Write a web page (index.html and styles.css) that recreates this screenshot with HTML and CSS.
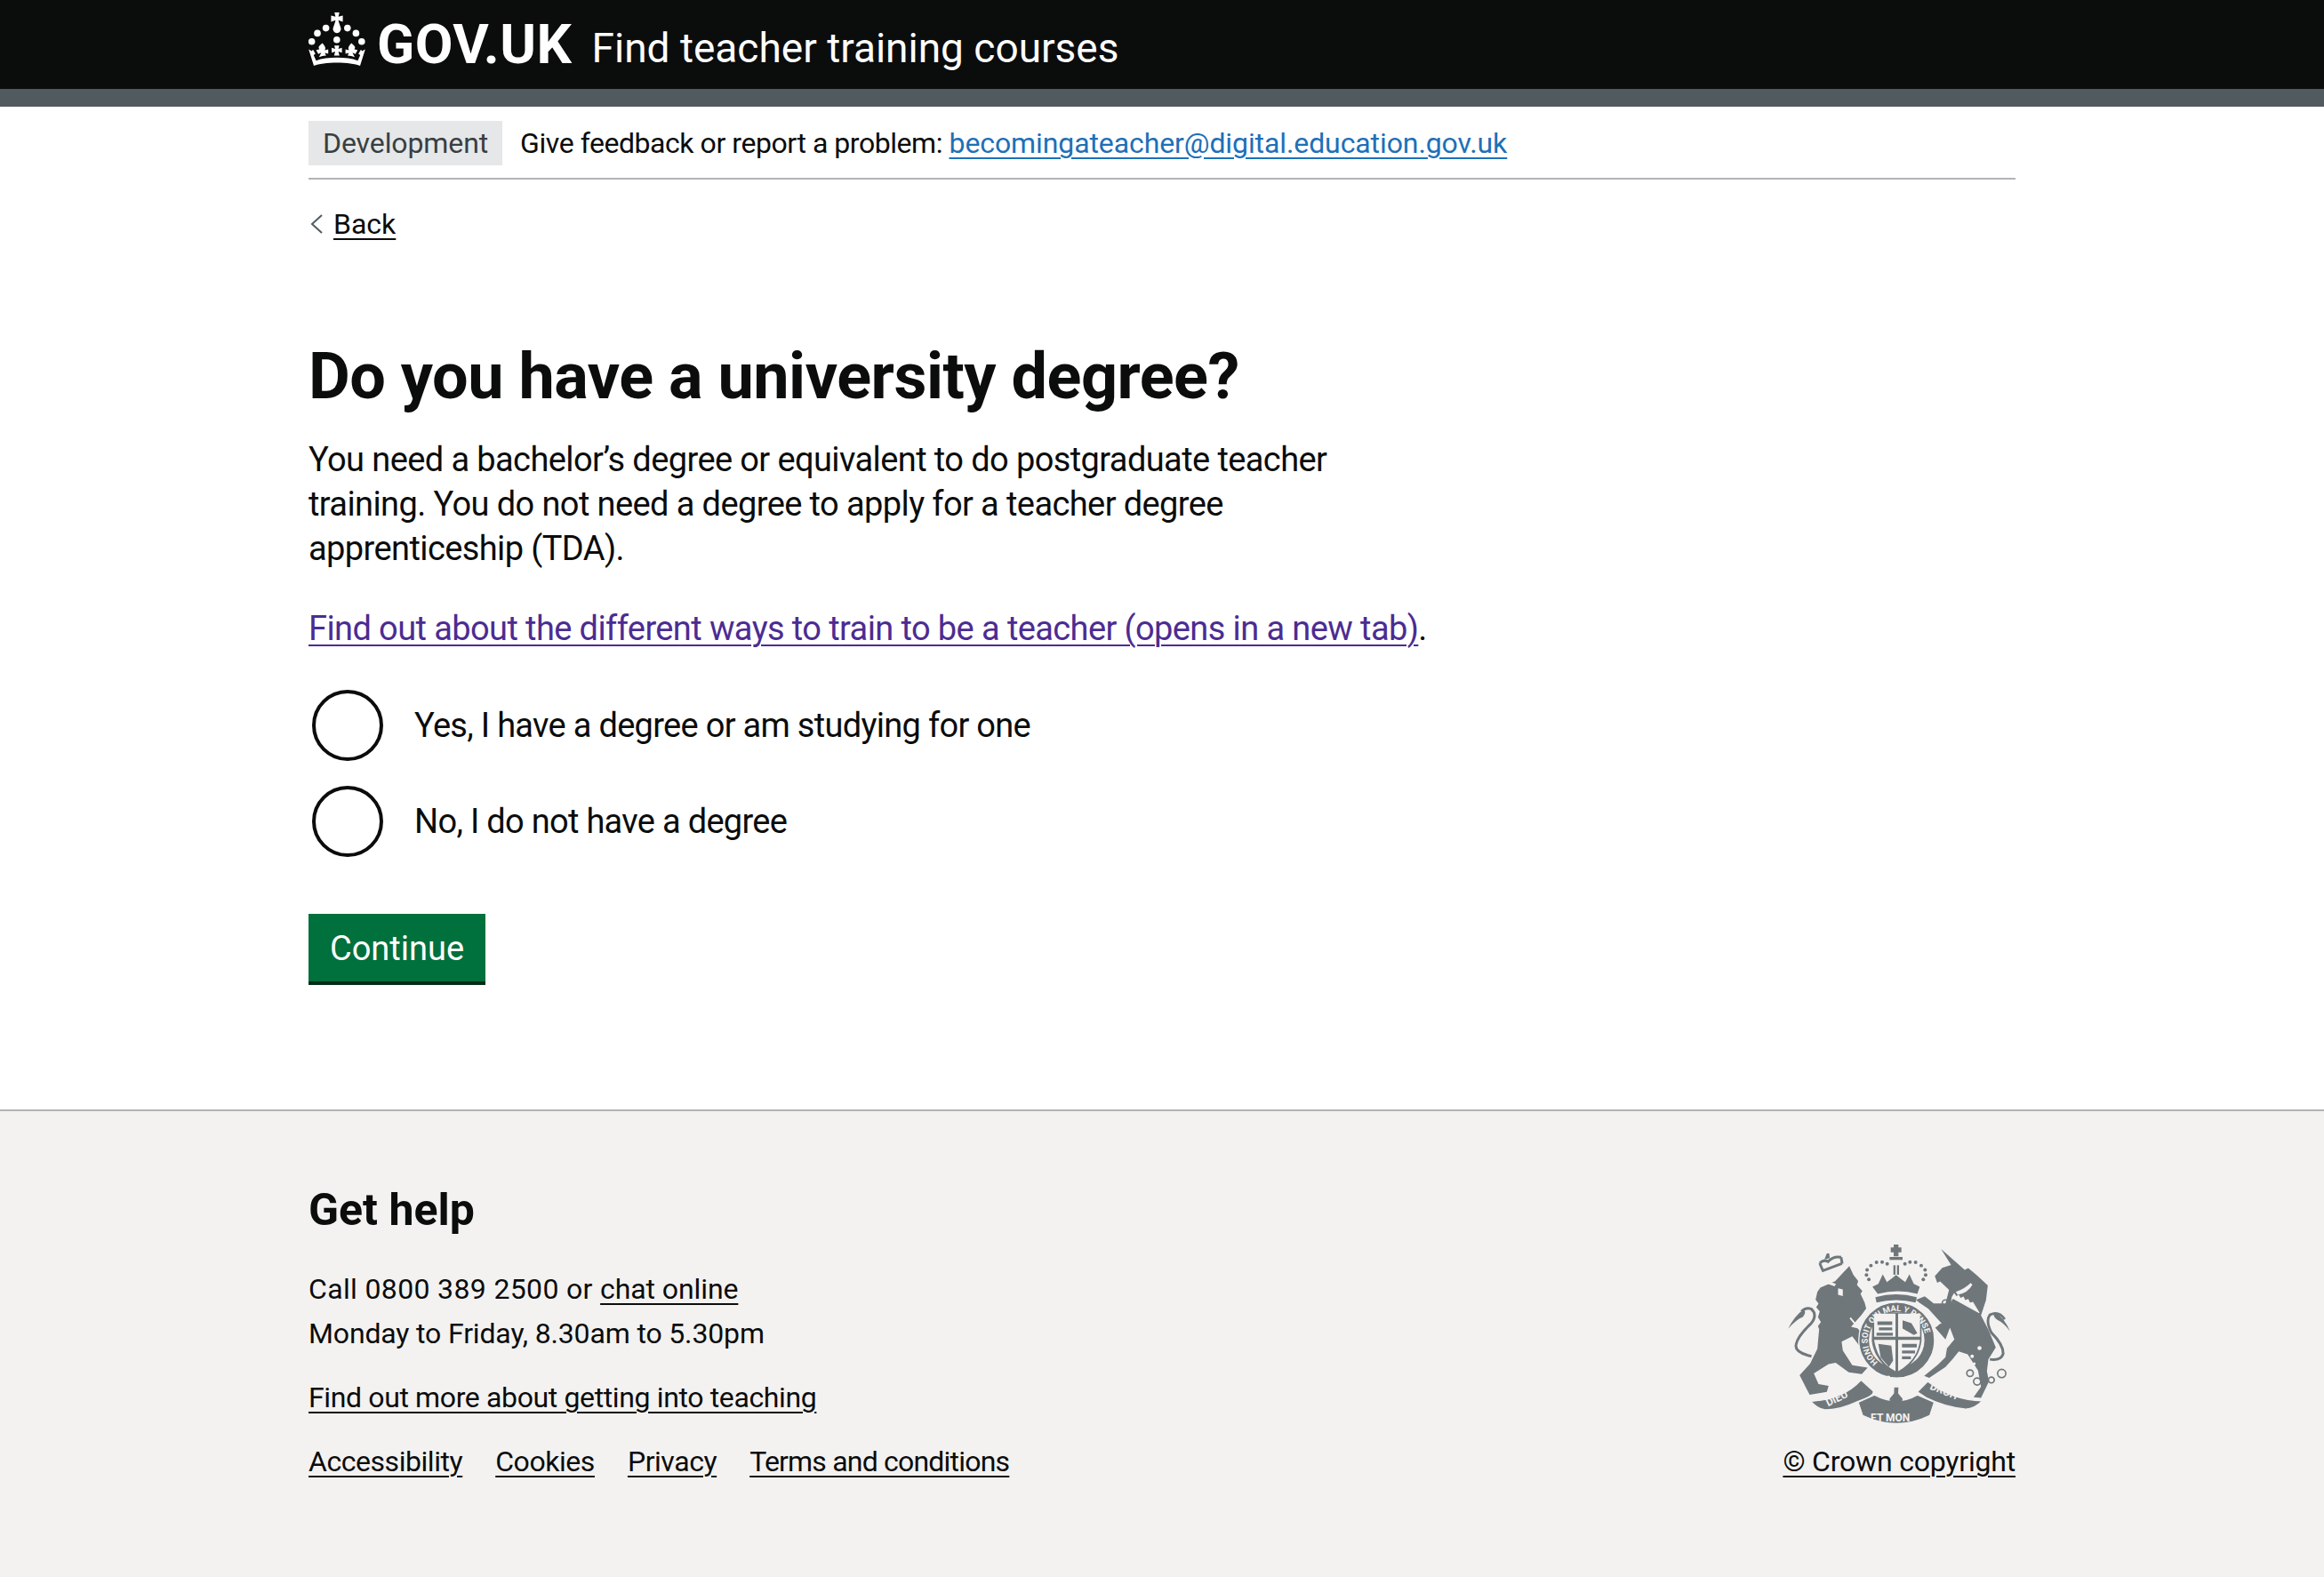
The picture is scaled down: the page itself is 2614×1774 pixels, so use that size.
FILE: index.html
```html
<!DOCTYPE html>
<html lang="en">
<head>
  <meta charset="UTF-8">
  <meta name="viewport" content="width=device-width, initial-scale=1.0">
  <title>Do you have a university degree?</title>
  <link rel="stylesheet" href="styles.css">
</head>
<body>
  <header class="header">
    <div class="container header-inner">
      <a class="logo" href="#">
        <svg class="crown" viewBox="0 0 32 30" width="64" height="60" aria-hidden="true">
          <path d="M14.6 0h2.800l-.6 2.400 2.500-.7v3.500l-2.500-.8.2.9 1.200 3.600c.3 1.300-.9 2.700-2.200 2.700s-2.500-1.400-2.200-2.700l1.200-3.600.2-.9-2.500.8V1.700l2.500.7z"/>
          <circle cx="1.800" cy="16.400" r="1.900"/>
          <circle cx="5" cy="11.700" r="1.900"/>
          <circle cx="9.800" cy="8.800" r="1.900"/>
          <circle cx="21.900" cy="8.800" r="1.900"/>
          <circle cx="26.700" cy="11.700" r="1.900"/>
          <circle cx="29.900" cy="16.400" r="1.900"/>
          <circle cx="15.900" cy="15.400" r="1.900"/>
          <path d="M14.500 18.600h2.800l-.5 1.900 2-.6v2.700l-2-.6.6 2.300h-3l.6-2.300-2 .6v-2.700l2 .6z"/>
          <path d="M7.800 17.200c.9 1 1.700 2 1.700 2.900l-.3 1.100 1.900-.5v2.600l-1.900-.6.7 1.600c-1.400.1-2.700.4-4 .8l1.300-2.500-1.700.8-1.200-2.300 1.800-.4-.4-1c0-.9 1.200-1.600 2.100-2.500z"/>
          <path d="M24.100 17.200c-.9 1-1.700 2-1.700 2.900l.3 1.100-1.900-.5v2.600l1.900-.6-.7 1.600c1.400.1 2.700.4 4 .8l-1.300-2.500 1.700.8 1.200-2.300-1.800-.4.4-1c0-.9-1.200-1.600-2.100-2.500z"/>
          <path d="M.1 20.700l1.800 1 .6-.8 1.400 2.400-1 .7 1.400 3.100c3.200-1.300 7.300-1.700 11.700-1.700s8.500.4 11.700 1.700l1.400-3.100-1-.7 1.400-2.400.6.8 1.800-1-2.900 9.300C26.400 28.800 21.300 28.200 16 28.200S5.600 28.800 3 30z"/>
        </svg>
        <span class="logo-text">GOV.UK</span>
      </a>
      <a class="service-name" href="#">Find teacher training courses</a>
    </div>
  </header>
  <div class="header-strip"></div>

  <div class="container">
    <div class="phase-banner">
      <strong class="phase-tag">Development</strong>
      <span class="phase-text">Give feedback or report a problem: <a class="link-blue" href="#">becomingateacher@digital.education.gov.uk</a></span>
    </div>

    <a class="back-link" href="#">
      <svg class="back-arrow" viewBox="0 0 14 22" width="14" height="22" aria-hidden="true"><path d="M13 1 2 11l11 10" fill="none" stroke="#505a5f" stroke-width="2"/></svg>
      <span>Back</span>
    </a>

    <main class="main">
      <h1 class="heading">Do you have a university degree?</h1>
      <p class="body-text">You need a bachelor’s degree or equivalent to do postgraduate teacher<br>training. You do not need a degree to apply for a teacher degree<br>apprenticeship (TDA).</p>
      <p class="body-text body-link"><a class="link-visited" href="#">Find out about the different ways to train to be a teacher (opens in a new tab)</a>.</p>

      <form class="radios">
        <label class="radio"><span class="radio-circle"></span><span>Yes, I have a degree or am studying for one</span></label>
        <label class="radio"><span class="radio-circle"></span><span>No, I do not have a degree</span></label>
      </form>

      <button class="button" type="button">Continue</button>
    </main>
  </div>

  <footer class="footer">
    <div class="container footer-inner">
      <div class="footer-left">
        <h2 class="footer-heading">Get help</h2>
        <p class="footer-line footer-call">Call 0800 389 2500 or <a href="#">chat online</a></p>
        <p class="footer-line">Monday to Friday, 8.30am to 5.30pm</p>
        <p class="footer-line footer-gap"><a href="#">Find out more about getting into teaching</a></p>
        <ul class="footer-links">
          <li><a href="#">Accessibility</a></li>
          <li><a href="#">Cookies</a></li>
          <li><a href="#">Privacy</a></li>
          <li class="footer-terms"><a href="#">Terms and conditions</a></li>
        </ul>
      </div>
      <div class="footer-right">
        <svg class="arms" viewBox="93 62 750 610" width="250" height="203" aria-hidden="true">
          <!-- royal crown -->
          <path d="M450 62h16v10h10v16h-10v14h-16V88h-10V72h10z"/>
          <rect x="436" y="104" width="44" height="10"/>
          <rect x="449" y="132" width="7" height="32"/>
          <rect x="461" y="132" width="7" height="32"/>
          <circle cx="358" cy="165" r="6"/><circle cx="360" cy="148" r="6"/><circle cx="373" cy="133" r="6"/><circle cx="392" cy="122" r="6"/><circle cx="411" cy="121" r="6"/><circle cx="428" cy="127" r="6"/>
          <circle cx="558" cy="165" r="6"/><circle cx="556" cy="148" r="6"/><circle cx="543" cy="133" r="6"/><circle cx="524" cy="122" r="6"/><circle cx="505" cy="121" r="6"/><circle cx="488" cy="127" r="6"/>
          <circle cx="366" cy="180" r="6"/><circle cx="550" cy="180" r="6"/>
          <path d="M378 205l20-10 15-32 14 26 16-12 15-12 15 12 16 12 14-26 15 32 20 10-8 24q-65-18-134 0z"/>
          <path d="M388 240q70-20 140 0l-4 18q-66-16-132 0z"/>
          <!-- lion -->
          <path d="M300 135l14 30 16 20-4 14 18 20-6 10 14 30 5 19-16 22-35 40 24 6 38 52-22 22-36-48-36 18 4 30 32 50 52 8-20 22-44-6-44-32-24 4-50 32 16 36 34 6-6 20-58 10-34-66 36-40 24-50 6-66-4-10 10-14-10-16 6-20-12-14 8-12-10-14 6-26 10-14 50-22z"/>
          <path class="arms-line" d="M207 152l68-26M200 125l10 24M272 105l4 22M200 125q15-14 28 -5q18-20 44-15"/>
          <path d="M216 112l8-20h8l2 16z"/>
          <path class="arms-tail" d="M172 440q-58-14-52-40 5-28 50-70 24-30 2-50-18-8-34 8"/>
          <path d="M145 282q-30 20-52 65 28-32 50-40 14-20 2-25z"/>
          <path class="arms-cut" d="M225 185l30 10-5 8-30-10zM262 210l16 4v22l-16-4zM305 308l36 44-4 4-36-44z"/>
          <!-- unicorn -->
          <path d="M610 77l80 71 12-6 28 23 38 35-6 50-17 52 25 48 25 60-25 40-5 40 7 35-27 55-25-2 25-35-10-55-35-55-30-10-20 25-25 28-55 37-17-7 47-38 25-25 5-30 25-30-15-40-15 40-35-40 22-14-45-50-30-20-12-10 30-12 30 24 40 0 12-46-30-28-10 4-8-22 25-28 30-10z"/>
          <path class="arms-cut" d="M660 222q30-10 50-30l6 6q-15 28-50 34zM646 240l8-14 8 10 8-4 6 10 10-4 6 12 10-4 6 12 10-2 22 36-6 8-90-46z"/>
          <path d="M650 245l90 50-6 10-90-50z"/>
          <circle class="arms-cut" cx="740" cy="412" r="7"/><circle class="arms-cut" cx="715" cy="440" r="6"/><circle class="arms-cut" cx="722" cy="465" r="5"/>
          <path class="arms-tail" d="M775 450q40 5 45-20 0-30-40-70-20-40-5-60 30-15 50 15"/>
          <path d="M790 290q35 20 53 65-20-28-45-40-15-12-8-25z"/>
          <g class="arms-ring">
            <circle cx="625" cy="260" r="11"/><circle cx="612" cy="344" r="12"/><circle cx="708" cy="497" r="11"/><circle cx="732" cy="525" r="12"/><circle cx="780" cy="520" r="10"/><circle cx="815" cy="498" r="14"/><circle cx="748" cy="368" r="10"/>
          </g>
          <!-- garter and shield -->
          <circle class="arms-ribbon" cx="460" cy="385" r="128"/>
          <circle class="arms-cut" cx="460" cy="385" r="94"/>
          <path d="M378 292h166v95q-8 70-84 118-76-48-84-118z"/>
          <path class="arms-cut" d="M384 296h72v78h-72zM465 296h74v78h-74zM384 384h72v106q-60-30-72-104zM465 384h74q-8 70-74 106z"/>
          <path d="M395 322h50v12h-50zM400 342h45v10h-45zM392 360h55v10h-55zM480 318l30 10 20 34-12 6-38-22zM478 398h50v12h-50zM478 420h44v10h-44zM478 440h30v10h-30zM398 398l44 6 6 50-14 22-28-32z"/>
          <path id="garter-arc" fill="none" d="M397 460A98 98 0 1 1 523 460"/>
          <text class="arms-garter"><textPath href="#garter-arc">HONI SOIT QUI MAL Y PENSE</textPath></text>
          <circle class="arms-cut" cx="432" cy="512" r="7"/><circle class="arms-cut" cx="470" cy="520" r="7"/>
          <!-- motto scroll -->
          <path class="arms-ribbon" d="M170 592q110-6 170-72l40 36q10 16-50 36-70 32-115 28-25-5-45-28z"/>
          <path class="arms-ribbon" d="M330 595l55-25q75 40 145 0l57 25-15 45q-112 55-227 0z"/>
          <path class="arms-ribbon" d="M530 560l35-35q85 65 185 65-30 30-60 28-70-8-130-38z"/>
          <path d="M452 545h14l-1 20 15 18-4 22-18 16-18-16-4-22 15-18z"/>
          <text class="arms-motto" transform="translate(228 610) rotate(-26)">DIEU</text>
          <text class="arms-motto" x="372" y="660">ET MON</text>
          <text class="arms-motto" transform="translate(570 550) rotate(22)">DROIT</text>
        </svg>
        <a class="copyright" href="#">© Crown copyright</a>
      </div>
    </div>
  </footer>
</body>
</html>
```

FILE: styles.css
```css
* {
  box-sizing: border-box;
}
html, body {
  height: 100%;
}
body {
  margin: 0;
  display: flex;
  flex-direction: column;
  min-height: 1774px;
  font-family: Roboto, Arial, sans-serif;
  color: #0b0c0c;
  background-color: #ffffff;
}
a {
  color: inherit;
  text-decoration-thickness: 2px;
  text-underline-offset: 5px;
}
.container {
  width: 1920px;
  margin-left: 347px;
}

/* header */
.header {
  height: 100px;
  background-color: #0b0c0c;
  color: #ffffff;
}
.header-inner {
  display: flex;
  align-items: flex-start;
  height: 100px;
}
.logo {
  display: flex;
  align-items: flex-start;
  color: #ffffff;
  text-decoration: none;
  padding-top: 14px;
}
.crown {
  fill: #ffffff;
  display: block;
}
.logo-text {
  margin-left: 13px;
  margin-top: 0;
  font-size: 62px;
  line-height: 72px;
  font-weight: 700;
  letter-spacing: 0.5px;
}
.service-name {
  margin-left: 22px;
  margin-top: 26px;
  color: #ffffff;
  text-decoration: none;
  font-size: 46px;
  line-height: 56px;
}
.header-strip {
  height: 20px;
  background-color: #505a5f;
}

/* phase banner */
.phase-banner {
  display: flex;
  align-items: center;
  padding: 16px 0 14px;
  border-bottom: 2px solid #b1b4b6;
  font-size: 32px;
  line-height: 50px;
}
.phase-tag {
  font-weight: 400;
  background-color: #e6e7e8;
  color: #383f43;
  padding: 0 16px;
  height: 50px;
  letter-spacing: -0.1px;
}
.phase-text {
  margin-left: 20px;
  letter-spacing: -0.45px;
}
.link-blue {
  color: #1d70b8;
  letter-spacing: -0.1px;
}

/* back link */
.back-link {
  display: flex;
  align-items: center;
  width: max-content;
  margin-top: 30px;
  font-size: 32px;
  line-height: 40px;
  text-decoration: none;
}
.back-link span {
  text-decoration: underline;
  text-decoration-thickness: 2px;
  text-underline-offset: 5px;
}
.back-arrow {
  margin-left: 2px;
  margin-right: 12px;
}

/* main */
.main {
  padding-top: 110px;
  padding-bottom: 144px;
}
.heading {
  margin: 0 0 30px;
  padding-top: 2px;
  height: 80px;
  font-size: 72px;
  line-height: 80px;
  font-weight: 700;
  letter-spacing: -0.5px;
}
.body-text {
  margin: 0;
  font-size: 38px;
  line-height: 50px;
  letter-spacing: -0.6px;
}
.body-link {
  margin-top: 40px;
}
.link-visited {
  color: #4c2c92;
}
.radios {
  display: flex;
  flex-direction: column;
  gap: 28px;
  margin-top: 44px;
}
.radio {
  display: flex;
  align-items: center;
  font-size: 38px;
  line-height: 50px;
  letter-spacing: -0.7px;
}
.radio-circle {
  width: 80px;
  height: 80px;
  margin-left: 4px;
  margin-right: 35px;
  border: 4px solid #0b0c0c;
  border-radius: 50%;
  background-color: #ffffff;
}
.button {
  display: block;
  width: 199px;
  height: 76px;
  margin-top: 64px;
  padding: 2px 0 0;
  border: none;
  background-color: #00703c;
  box-shadow: 0 4px 0 #002d18;
  color: #ffffff;
  font-family: inherit;
  font-size: 38px;
  cursor: pointer;
}

/* footer */
.footer {
  flex: 1;
  background-color: #f3f2f1;
  border-top: 2px solid #b1b4b6;
}
.footer-inner {
  display: flex;
  justify-content: space-between;
  align-items: flex-end;
  padding-top: 84px;
}
.footer-heading {
  margin: 0 0 41px;
  padding-top: 2px;
  height: 50px;
  font-size: 50px;
  line-height: 50px;
  font-weight: 700;
}
.footer-line {
  margin: 0;
  font-size: 32px;
  line-height: 50px;
  letter-spacing: -0.15px;
}
.footer-call {
  letter-spacing: 0.35px;
}
.footer-call a {
  letter-spacing: -0.1px;
}
.footer-gap {
  margin-top: 22px;
  letter-spacing: -0.37px;
}
.footer-links {
  display: flex;
  gap: 37px;
  margin: 22px 0 0;
  padding: 0;
  list-style: none;
  font-size: 32px;
  line-height: 50px;
  letter-spacing: -0.45px;
}
.footer-terms {
  letter-spacing: -0.8px;
}

/* crest */
.footer-right {
  display: flex;
  flex-direction: column;
  align-items: center;
  gap: 16px;
}
.arms {
  display: block;
  fill: #6f777b;
}
.arms-cut {
  fill: #f3f2f1;
}
.arms-ring, .arms-line, .arms-tail {
  fill: none;
  stroke: #6f777b;
}
.arms-ring {
  stroke-width: 5;
}
.arms-line {
  stroke-width: 9;
}
.arms-tail {
  stroke-width: 9;
}
.arms-ribbon {
  stroke: #f3f2f1;
  stroke-width: 4;
}
.arms-garter, .arms-motto {
  fill: #f3f2f1;
  font-family: Roboto, Arial, sans-serif;
  font-weight: 700;
}
.arms-garter {
  font-size: 28px;
}
.arms-motto {
  font-size: 36px;
}
.copyright {
  font-size: 32px;
  line-height: 50px;
  letter-spacing: -0.2px;
}
```
